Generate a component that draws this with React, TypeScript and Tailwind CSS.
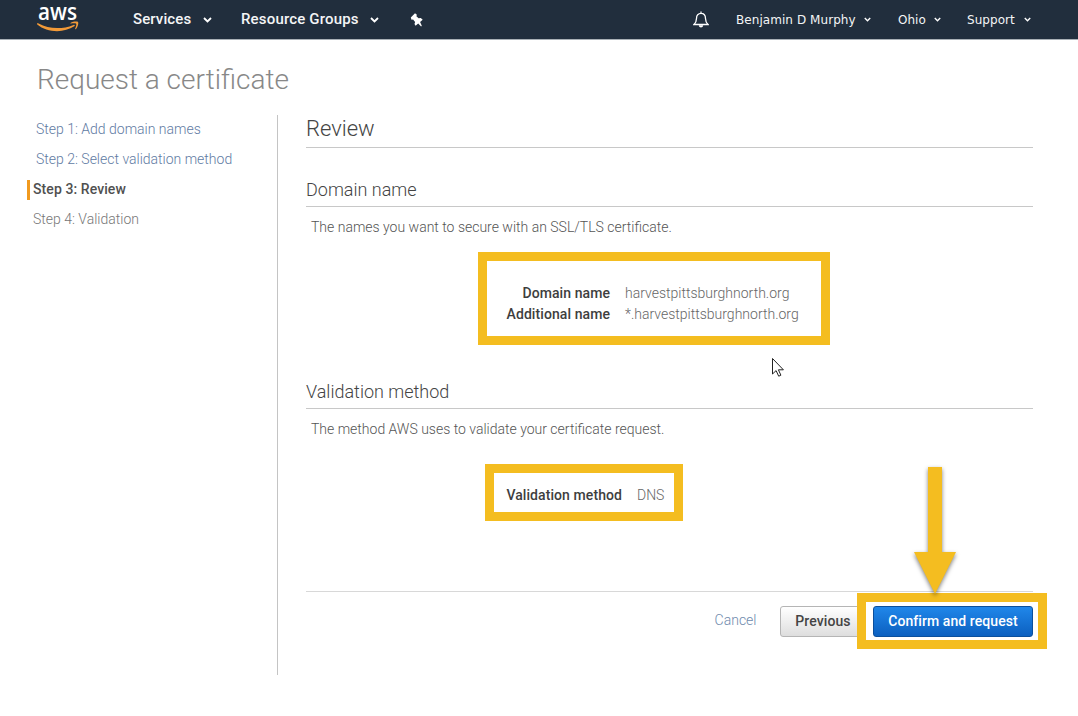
import type { ReactNode } from 'react'

const steps = [
  { label: 'Step 1: Add domain names', state: 'done' },
  { label: 'Step 2: Select validation method', state: 'done' },
  { label: 'Step 3: Review', state: 'current' },
  { label: 'Step 4: Validation', state: 'next' },
]

const stepClass: Record<string, string> = {
  done: 'pl-[10px] text-[#5f7ba3]',
  current: 'ml-px border-l-[3px] border-[#f19a1f] pl-[3px] font-medium tracking-[0.08px] text-[#505050]',
  next: 'pl-[7px] text-[#777]',
}

function AwsLogo() {
  return (
    <svg width="42" height="32" viewBox="0 0 42 32" className="shrink-0 overflow-visible">
      <text
        x="1"
        y="19"
        textLength="39"
        lengthAdjust="spacingAndGlyphs"
        fill="#fff"
        fontFamily="'Open Sans', 'Noto Sans', sans-serif"
        fontSize="23"
        fontWeight="600"
      >
        aws
      </text>
      <path d="M0 22.500c.5-.6 1-.3 1.600 0C12 28.200 25 28.500 36.500 23.900c1.200-.5 1.800.6.8 1.400C27 32.200 10 31.800.3 23.500c-.4-.4-.5-.7-.3-1z" fill="#f29a38" />
      <path d="M33.500 21.900c2.200-1.600 6.800-1.700 7.500-1 .8.800-.2 5.400-2.200 7.200-.5.400-.9.200-.7-.300.700-1.600 1.600-4.300 1.100-5-.5-.600-3.400-.500-5.100-.300-.700 0-.900-.300-.600-.6z" fill="#f29a38" />
    </svg>
  )
}

function Caret({ className }: { className: string }) {
  return (
    <svg viewBox="0 0 9 6" className={className} fill="none" stroke="#fff" strokeWidth="1.8">
      <path d="M1 1l3.500 3.500L8 1" />
    </svg>
  )
}

function TopBar() {
  return (
    <header className="flex h-10 items-center border-b border-[#a9b0b6] bg-[#212e3d] text-[#f4f5f6]">
      <div className="ml-[37px] w-[96px] self-start pt-px">
        <AwsLogo />
      </div>
      <div className="flex items-center text-[15px] font-medium">
        <span className="w-[70px] tracking-[0.1px]">Services</span>
        <Caret className="h-[6px] w-[9px]" />
        <span className="ml-[29px] w-[129px] tracking-[0.17px]">Resource Groups</span>
        <Caret className="h-[6px] w-[9px]" />
        <svg width="14" height="14" viewBox="0 0 14 14" className="ml-[31px]" fill="#fff">
          <path d="M.8 4.500L5 .3l1.900 1.500-.5 1.500 2.200 2 2.200-.3 1.900 1.800-2.600 2.300 1.700 3.700-.7.600-2.900-3-2.600 2.300-1.100-1.600.6-2-2-2.500-1.600.2z" />
        </svg>
      </div>
      <div className="ml-auto flex items-center font-['DejaVu_Sans'] text-[12px] font-normal">
        <svg width="16" height="18" viewBox="0 0 16 18" className="mr-[27px]" fill="none" stroke="#fff" strokeWidth="1.300">
          <path d="M8 .5v1.800M1 13.500c2-2 2.500-3 2.500-6 0-3.200 1.800-5.200 4.500-5.200s4.500 2 4.500 5.200c0 3 .5 4 2.500 6z" />
          <path d="M5.800 14.200h4.400c-.3 3-4.100 3-4.400 0z" fill="#fff" stroke="none" />
        </svg>
        <span className="w-[128px] tracking-[0.06px]">Benjamin D Murphy</span>
        <Caret className="h-[5px] w-[7px]" />
        <span className="ml-[27px] w-9">Ohio</span>
        <Caret className="h-[5px] w-[7px]" />
        <span className="ml-[26px] w-[57px] tracking-[0.06px]">Support</span>
        <Caret className="mr-[47px] h-[5px] w-[7px]" />
      </div>
    </header>
  )
}

function Section({ title, text, children }: { title: string; text: string; children: ReactNode }) {
  return (
    <section>
      <h3 className="h-[33px] border-b border-[#c8c8c8] text-[18px] leading-[32px] text-[#444]">{title}</h3>
      <p className="mt-[10px] ml-[5px] h-5 text-[14px] leading-5 text-[#555]">{text}</p>
      {children}
    </section>
  )
}

function Field({ label, value }: { label: string; value: string }) {
  return (
    <>
      <dt className="text-right font-medium tracking-[0.08px] text-[#3e3e3e]">{label}</dt>
      <dd className="text-[#666]">{value}</dd>
    </>
  )
}

function Arrow() {
  return (
    <svg
      width="60"
      height="145"
      viewBox="0 0 60 145"
      className="pointer-events-none absolute -top-[144px] left-[32px] drop-shadow-[0_2px_2px_rgba(0,0,0,0.5)]"
    >
      <path d="M23 5h14v85h14L30 132 9 90h14z" fill="#f4bd20" />
    </svg>
  )
}

export default function App() {
  return (
    <div className="relative h-[716px] w-[1078px] overflow-hidden bg-white font-['Roboto'] font-light">
      <TopBar />
      <h1 className="mt-5 ml-[37px] h-10 text-[28px] leading-10 text-[#888]">Request a certificate</h1>
      <div className="mt-[15px] flex">
        <nav className="h-[560px] w-[278px] border-r border-[#c4c4c4] pl-[26px] text-[14px]">
          {steps.map((s) => (
            <div key={s.label} className="flex h-[30px] items-center">
              <a className={`h-5 leading-[18px] ${stepClass[s.state]}`}>{s.label}</a>
            </div>
          ))}
        </nav>
        <main className="ml-7 w-[727px]">
          <h2 className="h-[33px] border-b border-[#c8c8c8] text-[22px] leading-[27px] text-[#444]">Review</h2>
          <div className="h-[26px]" />
          <Section title="Domain name" text="The names you want to secure with an SSL/TLS certificate.">
            <dl className="mt-[15px] ml-[172px] grid h-[93px] w-[352px] grid-cols-[123px_1fr] content-start gap-x-[15px] border-[9px] border-[#f4bd20] pt-[22px] text-[14px] leading-[21px]">
              <Field label="Domain name" value="harvestpittsburghnorth.org" />
              <Field label="Additional name" value="*.harvestpittsburghnorth.org" />
            </dl>
          </Section>
          <div className="h-[31px]" />
          <Section title="Validation method" text="The method AWS uses to validate your certificate request.">
            <dl className="mt-[25px] ml-[179px] grid h-[57px] w-[198px] grid-cols-[128px_1fr] content-start gap-x-[15px] border-[9px] border-[#f4bd20] pt-3 text-[14px] leading-[21px]">
              <Field label="Validation method" value="DNS" />
            </dl>
          </Section>
          <div className="mt-[70px] flex items-center justify-end border-t border-[#d8d8d8] pt-[14px] text-[14px]">
            <a className="mr-[23.500px] pb-[2px] text-[#6f8aad]">Cancel</a>
            <button className="h-[31px] w-[86px] rounded-[3px] border border-[#b5b5b5] bg-linear-to-b from-white to-[#dedede] font-medium tracking-[0.08px] text-[#444]">
              Previous
            </button>
            <div className="relative ml-[7px]">
              <button className="block h-[31px] w-[160px] rounded-[3px] border border-[#0b4f9c] bg-linear-to-b from-[#2087ea] to-[#0c60c0] font-medium tracking-[0.08px] text-white">
                Confirm and request
              </button>
              <div className="absolute -top-[13px] -left-4 h-14 w-[190px] border-[9px] border-[#f4bd20]" />
              <Arrow />
            </div>
          </div>
        </main>
      </div>
      {/* mouse pointer */}
      <svg width="14" height="21" viewBox="0 0 14 21" className="absolute top-[357px] left-[771px]">
        <path d="M1.500 1.500v15.500l3.600-3.400 2.600 5.600 2.200-1-2.500-5.400h5z" fill="#fff" stroke="#222" />
      </svg>
    </div>
  )
}
